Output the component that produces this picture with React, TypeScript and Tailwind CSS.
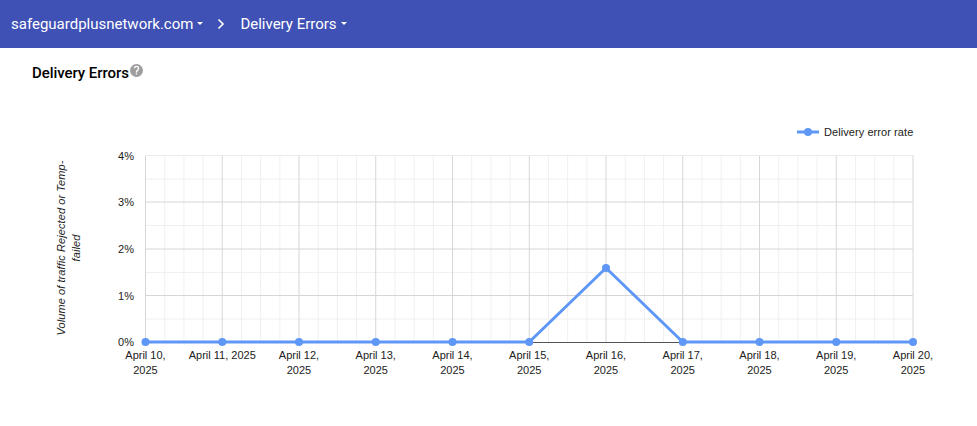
import React from "react";

const X0 = 145.5;
const STEP = 76.75;
const xs = Array.from({ length: 11 }, (_, i) => X0 + STEP * i);
const ys = [155.5, 202, 249, 295.5, 342];
const minorX: number[] = [];
for (let i = 0; i < 10; i++) for (let j = 1; j < 4; j++) minorX.push(xs[i] + (STEP * j) / 4);
const minorY = [179, 225.5, 272.5, 319];
const labels: [string, string?][] = [
  ["April 10,", "2025"],
  ["April 11, 2025"],
  ["April 12,", "2025"],
  ["April 13,", "2025"],
  ["April 14,", "2025"],
  ["April 15,", "2025"],
  ["April 16,", "2025"],
  ["April 17,", "2025"],
  ["April 18,", "2025"],
  ["April 19,", "2025"],
  ["April 20,", "2025"],
];
const vals = [0, 0, 0, 0, 0, 0, 268, 0, 0, 0, 0];

function Chart() {
  const pts = xs.map((x, i) => [x, vals[i] || 342]);
  return (
    <svg width="977" height="378" viewBox="0 48 977 378" className="block" style={{ fontFamily: '"Liberation Sans", Arial, sans-serif' }}>
      {minorX.map((x) => (
        <line key={x} x1={x} x2={x} y1={155} y2={342} stroke="#f0f0f0" />
      ))}
      {minorY.map((y) => (
        <line key={y} x1={145} x2={913} y1={y} y2={y} stroke="#f0f0f0" />
      ))}
      {xs.map((x) => (
        <line key={x} x1={x} x2={x} y1={155} y2={342} stroke="#d6d6d6" />
      ))}
      {ys.slice(1, 4).map((y) => (
        <line key={y} x1={145} x2={913} y1={y} y2={y} stroke="#d6d6d6" />
      ))}
      <line x1={145} x2={913.5} y1={155.5} y2={155.5} stroke="#ebebeb" />
      <line x1={145} x2={913} y1={342.5} y2={342.5} stroke="#555555" />
      <polyline
        points={pts.map((p) => p.join(",")).join(" ")}
        fill="none"
        stroke="#5e97f6"
        strokeWidth="3"
        strokeLinejoin="round"
      />
      {pts.map(([x, y]) => (
        <circle key={x} cx={x} cy={y} r="4" fill="#5e97f6" />
      ))}
      {["4%", "3%", "2%", "1%", "0%"].map((t, i) => (
        <text key={t} x={134} y={ys[i] + 4} textAnchor="end" fontSize="11" fill="#222222">
          {t}
        </text>
      ))}
      {labels.map((l, i) => (
        <g key={i} fontSize="11" fill="#222222" textAnchor="middle">
          <text x={xs[i]} y={359}>{l[0]}</text>
          {l[1] && <text x={xs[i]} y={374}>{l[1]}</text>}
        </g>
      ))}
      <g fontSize="11" fontStyle="italic" fill="#222222" textAnchor="middle" letterSpacing="0.08">
        <text transform="translate(64.5 248) rotate(-90)">Volume of traffic Rejected or Temp-</text>
        <text transform="translate(79.5 248) rotate(-90)">failed</text>
      </g>
      <line x1={797} x2={819} y1={132} y2={132} stroke="#5e97f6" strokeWidth="3" />
      <circle cx={808} cy={132} r="4" fill="#5e97f6" />
      <text x={824} y={136} fontSize="11" fill="#222222" letterSpacing="0.07">Delivery error rate</text>
    </svg>
  );
}

function Caret() {
  return <span className="ml-[4px] mb-[1px] inline-block border-x-[3.5px] border-t-[3.5px] border-x-transparent border-t-white" />;
}

export default function App() {
  return (
    <div className="h-[426px] w-[977px] overflow-hidden bg-white font-['Roboto',sans-serif]">
      <header className="flex h-12 items-center bg-[#3f51b5] pl-[11px] text-[15px] text-white">
        <span className="flex items-center">
          safeguardplusnetwork.com
          <Caret />
        </span>
        <svg width="8" height="12" viewBox="0 0 8 12" className="ml-[14px] mr-[15px]" fill="none" stroke="white" strokeWidth="1.6">
          <path d="M1.5 1.5 6 6l-4.5 4.5" />
        </svg>
        <span className="flex items-center">
          Delivery Errors
          <Caret />
        </span>
      </header>
      <div className="relative">
        <div className="absolute left-8 top-[14px] flex items-start text-[15px] font-medium tracking-[-0.06px] text-black">
          <span>Delivery Errors</span>
          <svg width="13" height="13" viewBox="0 0 24 24" className="mt-[2px] ml-[1px]" fill="#9e9e9e">
            <path d="M12 0a12 12 0 1 0 0 24 12 12 0 0 0 0-24Zm1.3 19.5h-2.6V17h2.6v2.5Zm2.7-8.4-1.2 1.2c-1 1-1.5 1.7-1.5 3.2h-2.6v-.6c0-1.4.5-2.6 1.5-3.6l1.6-1.6c.5-.5.7-1 .7-1.7a2.4 2.4 0 0 0-4.9 0H7a5 5 0 0 1 10 0c0 1.1-.4 2-1 2.7Z" />
          </svg>
        </div>
        <Chart />
      </div>
    </div>
  );
}
